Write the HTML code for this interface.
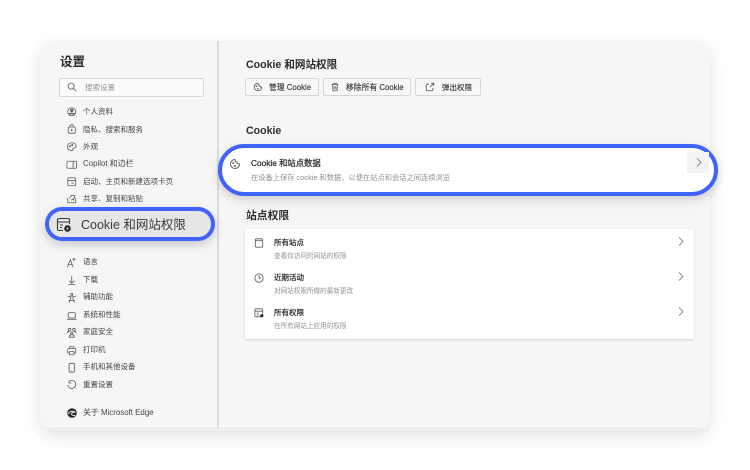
<!DOCTYPE html>
<html lang="zh"><head><meta charset="utf-8"><style>
html,body{margin:0;padding:0;background:#fff}
body{width:750px;height:470px;position:relative;overflow:hidden;font-family:"Liberation Sans","Noto Sans CJK SC",sans-serif;color:#2b2b2b}
.a{position:absolute;white-space:nowrap}
.win{position:absolute;left:40px;top:41px;width:670px;height:389px;background:#f6f6f6;border-radius:14px;box-shadow:0 6px 16px rgba(0,0,0,.12);box-sizing:border-box}
.div{position:absolute;left:217px;top:41px;width:1.5px;height:387px;background:#dcdcdc}
.bl{position:absolute;left:48px;top:428px;width:654px;height:1px;background:#e6e6e6}
.m{position:absolute;left:83px;font-size:7.5px;line-height:14px;color:#444;white-space:nowrap}
.i{position:absolute;left:65.5px;width:11.5px;height:11.5px;margin-top:.5px;fill:none;stroke:#5a5a5a;stroke-width:.9}
.btn{position:absolute;top:78px;height:18px;box-sizing:border-box;background:#f8f8f8;border:1px solid #d6d6d6;border-radius:2px;font-size:7.8px;line-height:17px;color:#3a3a3a;-webkit-text-stroke:.15px #3a3a3a;white-space:nowrap}
.btn svg{position:absolute;left:7px;top:3px;width:10px;height:10px;fill:none;stroke:#555;stroke-width:1}
.btn span{position:absolute;top:0}
.chev{position:absolute;width:6px;height:9px;fill:none;stroke:#888;stroke-width:.9}
.t{position:absolute;left:274px;font-size:7.5px;line-height:12px;color:#2e2e2e;-webkit-text-stroke:.25px #2e2e2e;white-space:nowrap}
.s{position:absolute;left:274px;font-size:6.6px;line-height:10px;color:#929292;white-space:nowrap}
.ci{position:absolute;left:253px;width:12px;height:12px;fill:none;stroke:#5a5a5a;stroke-width:.9}
.h{position:absolute;left:246px;font-size:10.6px;line-height:15px;font-weight:700;color:#2e2e2e;white-space:nowrap}
</style></head><body>
<div class="win"></div>
<div class="div"></div>
<div class="bl"></div>

<div class="a" style="left:60px;top:54px;font-size:12.5px;line-height:17px;font-weight:700;color:#2a2a2a">设置</div>
<div class="a" style="left:59px;top:78px;width:145px;height:19px;box-sizing:border-box;background:#fbfbfb;border:1px solid #d6d6d6;border-radius:2px"></div>
<svg class="a" style="left:67px;top:82px;width:10px;height:10px;fill:none;stroke:#666;stroke-width:1" viewBox="0 0 11 11"><circle cx="4.600" cy="4.600" r="3.300"/><path d="M7 7l3 3"/></svg>
<div class="a" style="left:85px;top:82px;font-size:7.5px;line-height:11px;color:#939393">搜索设置</div>

<svg class="i" style="top:105px" viewBox="0 0 13 13"><circle cx="6.500" cy="6.500" r="4.500"/><circle cx="6.500" cy="5" r="1.500" fill="#777"/><path d="M3.200 9.500c1-2 5.600-2 6.600 0" fill="#777"/></svg>
<div class="m" style="top:105px">个人资料</div>
<svg class="i" style="top:122px" viewBox="0 0 13 13"><rect x="2.500" y="4.500" width="8" height="7" rx="1"/><path d="M4.500 4.500c0-3.500 4-3.500 4 0"/><circle cx="6.500" cy="8" r=".6" fill="#5a5a5a"/></svg>
<div class="m" style="top:123px">隐私、搜索和服务</div>
<svg class="i" style="top:140px" viewBox="0 0 13 13"><path d="M6.500 2C3.500 2 1.500 4 1.500 6.500S4 11 6.500 11c1.500 0 1-1.500 1.500-2.500s3.500 0 3.500-2.500S9.500 2 6.500 2z"/><circle cx="4.500" cy="6" r=".7"/><circle cx="7" cy="4.500" r=".7"/></svg>
<div class="m" style="top:140px">外观</div>
<svg class="i" style="top:158px" viewBox="0 0 13 13"><rect x="1" y="2.500" width="11" height="8" rx="1"/><path d="M8 2.500v8"/></svg>
<div class="m" style="top:157px;font-size:7.9px">Copilot 和边栏</div>
<svg class="i" style="top:175px" viewBox="0 0 13 13"><rect x="2" y="2" width="9" height="9" rx="1.500"/><path d="M2 5h9M6 8h3"/></svg>
<div class="m" style="top:175px">启动、主页和新建选项卡页</div>
<svg class="i" style="top:192px" viewBox="0 0 13 13"><path d="M2 5.500v5.500h9V5.500M4 6l2.500-3.500L10 3l-1 3.500M6 8l2-1.500 1 2"/></svg>
<div class="m" style="top:192px">共享、复制和粘贴</div>

<div class="a" style="left:45px;top:207px;width:170px;height:34px;box-sizing:border-box;background:#e6e6e6;border:4px solid #3f63fb;border-radius:17px;box-shadow:0 4px 10px rgba(0,0,0,.18)"></div>
<svg class="a" style="left:56px;top:217px;width:16px;height:16px;fill:none;stroke:#3a3a3a;stroke-width:1.100" viewBox="0 0 16 16"><path d="M7 13.500H3a1.500 1.500 0 0 1-1.500-1.500V3A1.500 1.500 0 0 1 3 1.500h9A1.500 1.500 0 0 1 13.500 3v4M1.500 5h12M4 8h3M4 10.500h2"/><circle cx="11.500" cy="11.500" r="2.800" fill="#333" stroke="#333"/><circle cx="11.500" cy="11.500" r=".9" fill="#e6e6e6" stroke="none"/></svg>
<div class="a" style="left:81px;top:217px;font-size:12.500px;line-height:16px;color:#3a3a3a">Cookie 和网站权限</div>

<svg class="i" style="top:256px" viewBox="0 0 13 13"><path d="M1.500 11.500L5 3l3 8.500M2.800 8.500h4.500M9 5V1.500M7.500 3L9 1.500 10.500 3"/></svg>
<div class="m" style="top:255px">语言</div>
<svg class="i" style="top:273px" viewBox="0 0 13 13"><path d="M6.500 2v8M3.500 7.500l3 3 3-3M2.500 12h8"/></svg>
<div class="m" style="top:273px">下载</div>
<svg class="i" style="top:291px" viewBox="0 0 13 13"><circle cx="6.500" cy="2.800" r="1.300"/><path d="M1.500 4.500l3.500 1h3l3.500-1M5 5.500v2.500L3.500 12M8 5.500v2.500l1.500 4M3 9.500h7"/></svg>
<div class="m" style="top:290px">辅助功能</div>
<svg class="i" style="top:309px" viewBox="0 0 13 13"><rect x="2.500" y="3" width="8" height="6" rx="1"/><path d="M1 10.500h11"/></svg>
<div class="m" style="top:308px">系统和性能</div>
<svg class="i" style="top:326px" viewBox="0 0 13 13"><circle cx="4" cy="3" r="1.500"/><circle cx="9" cy="3" r="1.500"/><circle cx="6.500" cy="7" r="1.300"/><path d="M1.500 7c0-1.500 1-2 2.500-2M11.500 7c0-1.500-1-2-2.500-2M3.500 11.500c0-2 1.200-2.800 3-2.800s3 .8 3 2.800z"/></svg>
<div class="m" style="top:325px">家庭安全</div>
<svg class="i" style="top:344px" viewBox="0 0 13 13"><path d="M4 4V2h5v2M3.500 9H2V5a1 1 0 0 1 1-1h7a1 1 0 0 1 1 1v4H9.500M4 7.500h5V11H4z"/></svg>
<div class="m" style="top:343px">打印机</div>
<svg class="i" style="top:361px" viewBox="0 0 13 13"><rect x="3.500" y="1.500" width="6" height="10" rx="1"/><path d="M6 9.800h1"/></svg>
<div class="m" style="top:360px">手机和其他设备</div>
<svg class="i" style="top:378px" viewBox="0 0 13 13"><path d="M3.500 2.800A4.500 4.500 0 1 1 2 6.500M3.500 2v2.500H6"/></svg>
<div class="m" style="top:378px">重置设置</div>

<svg class="a" style="left:66px;top:407px;width:12px;height:12px" viewBox="0 0 13 13"><circle cx="6.500" cy="6.500" r="5.200" fill="#2a2a2a"/><path d="M2.500 7.500c1-3 5.500-4 7.500-1.500-1.500-.8-4-.5-4 1.500 0 1.500 2 2.200 4 1.500" fill="none" stroke="#f6f6f6" stroke-width="1"/></svg>
<div class="m" style="top:406px;font-size:7.9px">关于 Microsoft Edge</div>

<div class="h" style="top:58px">Cookie 和网站权限</div>

<div class="btn" style="left:245px;width:74px"><svg viewBox="0 0 12 12"><path d="M6 1.500a4.500 4.500 0 1 0 4.500 4.500C9 6 8 5.500 8 4 6.500 4 6 3 6 1.500z"/><circle cx="4.300" cy="5" r=".5"/><circle cx="6" cy="8" r=".5"/></svg><span style="left:23px">管理 Cookie</span></div>
<div class="btn" style="left:323px;width:88px"><svg style="left:6px" viewBox="0 0 12 12"><path d="M2 3h8M4.500 3V1.500h3V3M3 3l.5 7.500h5L9 3M5 5v3.500M7 5v3.500"/></svg><span style="left:22px">移除所有 Cookie</span></div>
<div class="btn" style="left:415px;width:66px"><svg style="left:9px" viewBox="0 0 12 12"><path d="M5 2.500H3A1.500 1.500 0 0 0 1.500 4v5A1.500 1.500 0 0 0 3 10.500h5A1.500 1.500 0 0 0 9.500 9V7M7 1.500h3.500V5M10.500 1.500L6 6"/></svg><span style="left:26px;font-size:7.5px">弹出权限</span></div>

<div class="h" style="top:124px">Cookie</div>

<div class="a" style="left:218px;top:144px;width:500px;height:52px;box-sizing:border-box;background:#fff;border:4px solid #3f63fb;border-radius:26px;box-shadow:0 4px 10px rgba(0,0,0,.16)"></div>
<svg class="a" style="left:229px;top:158px;width:12px;height:12px;fill:none;stroke:#555;stroke-width:.9" viewBox="0 0 12 12"><path d="M6 1.500a4.500 4.500 0 1 0 4.500 4.500C9 6 8 5.500 8 4 6.500 4 6 3 6 1.500z"/><circle cx="4.300" cy="5" r=".5"/><circle cx="6" cy="8" r=".5"/></svg>
<div class="a" style="left:251px;top:157px;font-size:8.3px;line-height:12px;color:#2e2e2e;-webkit-text-stroke:.25px #2e2e2e">Cookie 和站点数据</div>
<div class="a" style="left:251px;top:173px;font-size:7.25px;line-height:10px;color:#929292">在设备上保存 cookie 和数据，以便在站点和会话之间连续浏览</div>
<div class="a" style="left:687px;top:152px;width:22px;height:21px;background:#f3f3f3"></div>
<svg class="chev" style="left:696px;top:158px" viewBox="0 0 6 9"><path d="M1 .5l4 4-4 4"/></svg>

<div class="h" style="top:209px;font-size:10.8px">站点权限</div>

<div class="a" style="left:245px;top:229px;width:449px;height:110px;background:#fff;border-radius:2px;box-shadow:0 1px 2px rgba(0,0,0,.14)"></div>

<svg class="ci" style="top:237px" viewBox="0 0 13 13"><rect x="2.500" y="2" width="8" height="9" rx="1.500"/><path d="M2.500 4h8"/></svg>
<div class="t" style="top:237px">所有站点</div>
<div class="s" style="top:252px">查看你访问的网站的权限</div>
<svg class="chev" style="left:678px;top:237px" viewBox="0 0 6 9"><path d="M1 .5l4 4-4 4"/></svg>

<svg class="ci" style="top:272px" viewBox="0 0 13 13"><circle cx="6.500" cy="6.500" r="4.500"/><path d="M6.500 3.500v3.200h2.300"/></svg>
<div class="t" style="top:272px">近期活动</div>
<div class="s" style="top:287px">对网站权限所做的最新更改</div>
<svg class="chev" style="left:678px;top:272px" viewBox="0 0 6 9"><path d="M1 .5l4 4-4 4"/></svg>

<svg class="ci" style="top:307px" viewBox="0 0 13 13"><rect x="2" y="2" width="8.500" height="8.500" rx="1"/><path d="M2 4.500h8.500M4 6.500h2M4 8.500h2"/><circle cx="9.500" cy="9.500" r="1.800" fill="#333" stroke="none"/></svg>
<div class="t" style="top:307px">所有权限</div>
<div class="s" style="top:322px">在所有网站上应用的权限</div>
<svg class="chev" style="left:678px;top:307px" viewBox="0 0 6 9"><path d="M1 .5l4 4-4 4"/></svg>
</body></html>
